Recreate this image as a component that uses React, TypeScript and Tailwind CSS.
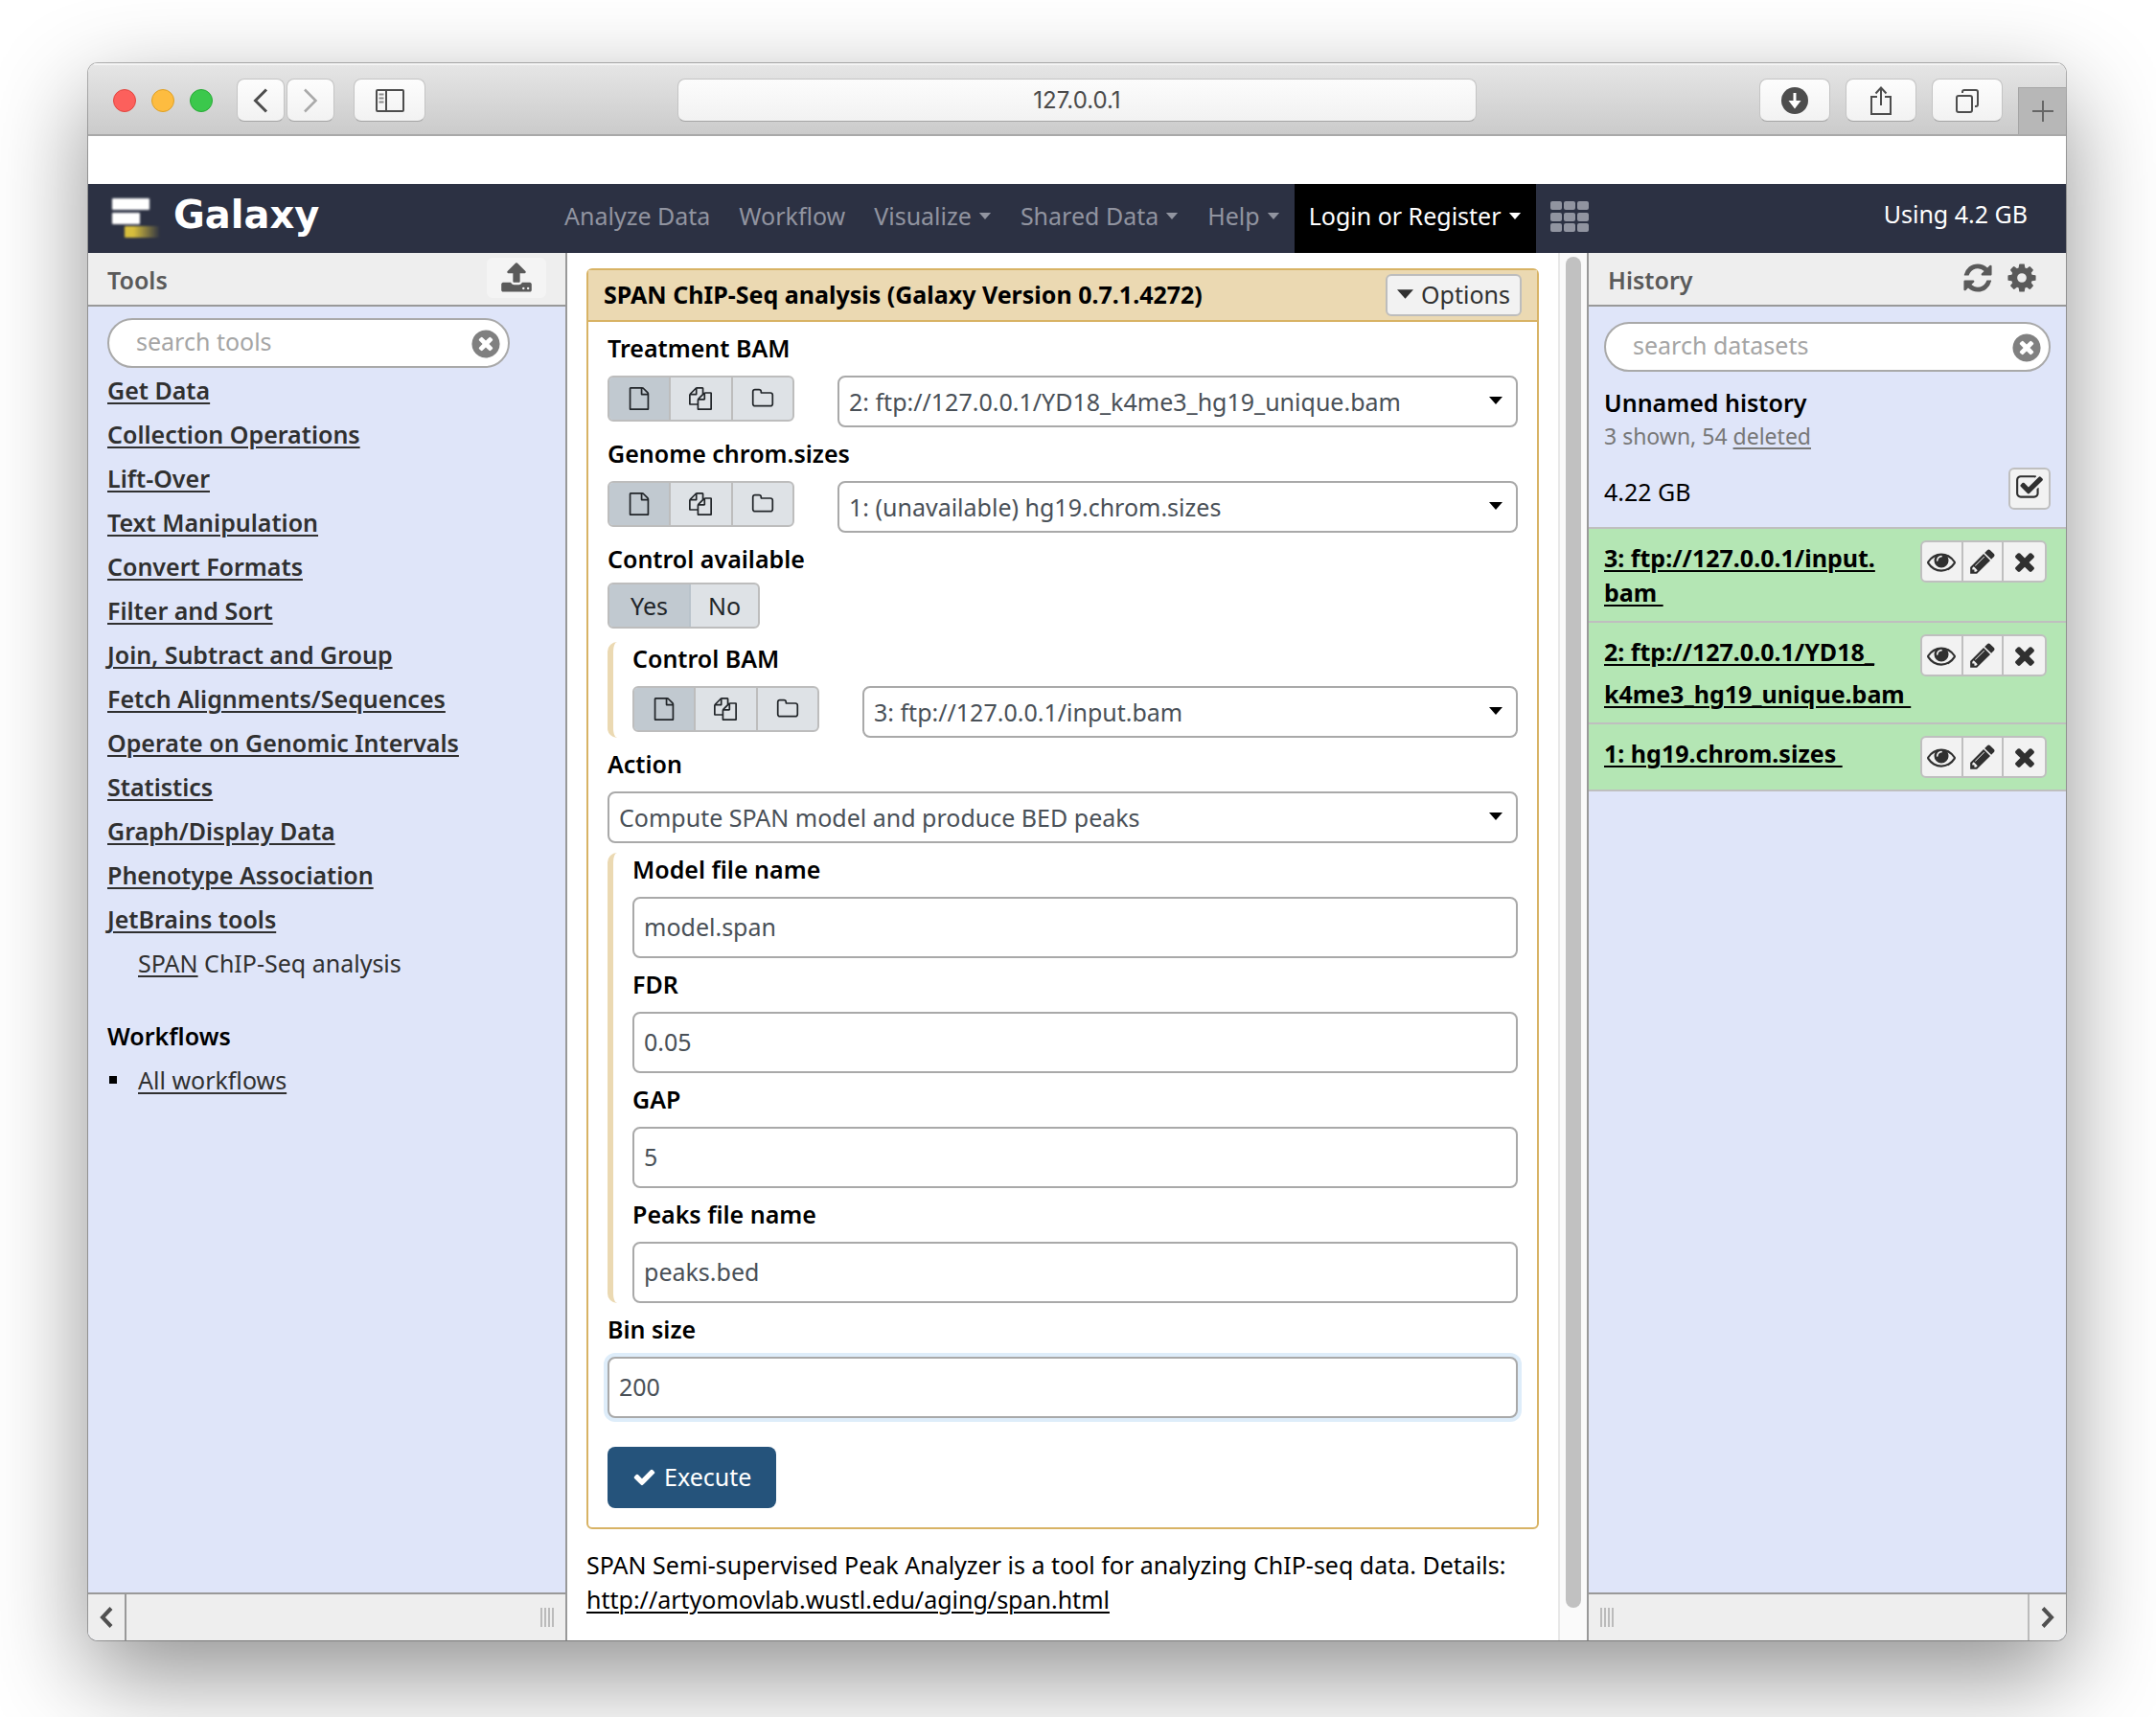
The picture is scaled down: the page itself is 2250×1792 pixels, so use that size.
import React, { useId } from "react";

const PATHS = {
  file: "M1596 380q28 28 48 76t20 88v1152q0 40-28 68t-68 28h-1344q-40 0-68-28t-28-68v-1600q0-40 28-68t68-28h896q40 0 88 20t76 48zm-444-244v376h376q-10-29-22-41l-313-313q-12-12-41-22zm384 1528v-1024h-416q-40 0-68-28t-28-68v-416h-768v1536h1280z",
  files: "M1696 384q40 0 68 28t28 68v1216q0 40-28 68t-68 28h-960q-40 0-68-28t-28-68v-288h-544q-40 0-68-28t-28-68v-672q0-40 20-88t48-76l408-408q28-28 76-48t88-20h416q40 0 68 28t28 68v328q68-40 128-40h416zm-544 213l-299 299h299v-299zm-640-384l-299 299h299v-299zm196 647l316-316v-416h-384v416q0 40-28 68t-68 28h-416v640h512v-256q0-40 20-88t48-76zm956 804v-1152h-384v416q0 40-28 68t-68 28h-416v640h896z",
  folder: "M1600 1312v-704q0-40-28-68t-68-28h-704q-40 0-68-28t-28-68v-64q0-40-28-68t-68-28h-320q-40 0-68 28t-28 68v960q0 40 28 68t68 28h1216q40 0 68-28t28-68zm128-704v704q0 92-66 158t-158 66h-1216q-92 0-158-66t-66-158v-960q0-92 66-158t158-66h320q92 0 158 66t66 158v32h672q92 0 158 66t66 158z",
  check: "M1671 566q0 40-28 68l-724 724-136 136q-28 28-68 28t-68-28l-136-136-362-362q-28-28-28-68t28-68l136-136q28-28 68-28t68 28l294 295 656-657q28-28 68-28t68 28l136 136q28 28 28 68z",
  eye: "M1664 960q-152-236-381-353 61 104 61 225 0 185-131.5 316.5t-316.5 131.5-316.5-131.5-131.5-316.5q0-121 61-225-229 117-381 353 133 205 333.5 326.5t434.5 121.5 434.5-121.5 333.5-326.5zm-720-384q0-20-14-34t-34-14q-125 0-214.5 89.5t-89.5 214.5q0 20 14 34t34 14 34-14 14-34q0-86 61-147t147-61q20 0 34-14t14-34zm848 384q0 34-20 69-140 230-376.5 368.5t-499.5 138.5-499.5-139-376.5-368q-20-35-20-69t20-69q140-229 376.5-368t499.5-139 499.5 139 376.5 368q20 35 20 69z",
  pencil: "M491 1536l91-91-235-235-91 91v107h128v128h107zm523-928q0-22-22-22-10 0-17 7l-542 542q-7 7-7 17 0 22 22 22 10 0 17-7l542-542q7-7 7-17zm-54-192l416 416-832 832h-416v-416zm683 96q0 53-37 90l-166 166-416-416 166-165q36-38 90-38 53 0 91 38l235 234q37 39 37 91z",
  times: "M1490 1322q0 40-28 68l-136 136q-28 28-68 28t-68-28l-294-294-294 294q-28 28-68 28t-68-28l-136-136q-28-28-28-68t28-68l294-294-294-294q-28-28-28-68t28-68l136-136q28-28 68-28t68 28l294 294 294-294q28-28 68-28t68 28l136 136q28 28 28 68t-28 68l-294 294 294 294q28 28 28 68z",
  checkSquare: "M1472 930v318q0 119-84.5 203.5t-203.5 84.5h-832q-119 0-203.5-84.5t-84.5-203.5v-832q0-119 84.5-203.5t203.5-84.5h832q63 0 117 25 15 7 18 23 3 17-9 29l-49 49q-10 10-23 10-3 0-9-2-23-6-45-6h-832q-66 0-113 47t-47 113v832q0 66 47 113t113 47h832q66 0 113-47t47-113v-254q0-13 9-22l64-64q10-10 23-10 6 0 12 3 20 8 20 29zm231-489l-814 814q-24 24-57 24t-57-24l-430-430q-24-24-24-57t24-57l110-110q24-24 57-24t57 24l263 263 647-647q24-24 57-24t57 24l110 110q24 24 24 57t-24 57z",
  refresh: "M1639 1056q0 5-1 7-64 268-268 434.5t-478 166.5q-146 0-282.5-55t-243.5-157l-129 129q-19 19-45 19t-45-19-19-45v-448q0-26 19-45t45-19h448q26 0 45 19t19 45-19 45l-137 137q71 66 161 102t187 36q134 0 250-65t186-179q11-17 53-117 8-23 30-23h192q13 0 22.5 9.5t9.5 22.5zm25-800v448q0 26-19 45t-45 19h-448q-26 0-45-19t-19-45 19-45l138-138q-148-137-349-137-134 0-250 65t-186 179q-11 17-53 117-8 23-30 23h-199q-13 0-22.5-9.5t-9.5-22.5v-7q65-268 270-434.5t480-166.5q146 0 284 55.5t245 156.5l130-129q19-19 45-19t45 19 19 45z",
  cog: "M1152 896q0-106-75-181t-181-75-181 75-75 181 75 181 181 75 181-75 75-181zm512-109v222q0 12-8 23t-20 13l-185 28q-19 54-39 91 35 50 107 138 10 12 10 25t-9 23q-27 37-99 108t-94 71q-12 0-26-9l-138-108q-44 23-91 38-16 136-29 186-7 28-36 28h-222q-14 0-24.5-8.5t-11.5-21.5l-28-184q-49-16-90-37l-141 107q-10 9-25 9-14 0-25-11-126-114-165-168-7-10-7-23 0-12 8-23 15-21 51-66.5t54-70.5q-27-50-41-99l-183-27q-13-2-21-12.5t-8-23.5v-222q0-12 8-23t19-13l186-28q14-46 39-92-40-57-107-138-10-12-10-24 0-10 9-23 26-36 98.5-107.5t94.5-71.5q13 0 26 10l138 107q44-23 91-38 16-136 29-186 7-28 36-28h222q14 0 24.5 8.5t11.5 21.5l28 184q49 16 90 37l142-107q9-9 24-9 13 0 25 10 129 119 165 170 7 8 7 22 0 12-8 23-15 21-51 66.5t-54 70.5q26 50 41 98l183 28q13 2 21 12.5t8 23.5z",
  upload: "M1344 1472q0-26-19-45t-45-19-45 19-19 45 19 45 45 19 45-19 19-45zm256 0q0-26-19-45t-45-19-45 19-19 45 19 45 45 19 45-19 19-45zm128-224v320q0 40-28 68t-68 28h-1472q-40 0-68-28t-28-68v-320q0-40 28-68t68-28h427q21 56 70.5 92t110.5 36h256q61 0 110.5-36t70.5-92h427q40 0 68 28t28 68zm-325-648q-17 40-59 40h-256v448q0 26-19 45t-45 19h-256q-26 0-45-19t-19-45v-448h-256q-42 0-59-40-17-39 14-69l448-448q18-19 45-19t45 19l448 448q31 30 14 69z",
  timesCircle: "M1277 1122q0-26-19-45l-181-181 181-181q19-19 19-45 0-27-19-46l-90-90q-19-19-46-19-26 0-45 19l-181 181-181-181q-19-19-45-19-27 0-46 19l-90 90q-19 19-19 46 0 26 19 45l181 181-181 181q-19 19-19 45 0 27 19 46l90 90q19 19 46 19 26 0 45-19l181-181 181 181q19 19 45 19 27 0 46-19l90-90q19-19 19-46zm387-226q0 209-103 385.5t-279.5 279.5-385.5 103-385.5-103-279.5-279.5-103-385.5 103-385.5 279.5-279.5 385.5-103 385.5 103 279.5 279.5 103 385.5z",
};

function Icon({ name, className }: { name: keyof typeof PATHS; className: string }) {
  return (
    <svg viewBox="0 0 1792 1792" fill="currentColor" className={className} aria-hidden="true">
      <path d={PATHS[name]} />
    </svg>
  );
}

function Caret({ className }: { className: string }) {
  return (
    <svg viewBox="0 0 14 8" fill="currentColor" className={className} aria-hidden="true">
      <path d="M0 0h14L7 8z" />
    </svg>
  );
}

const toolbarButton =
  "flex h-[45px] items-center justify-center rounded-lg border border-[#c4c4c4] border-b-[#a5a5a5] bg-linear-to-b from-[#fdfdfd] to-[#f2f2f2] text-[#4d4d4d]";

function TitleBar() {
  return (
    <div className="grid h-[76px] grid-cols-[minmax(0,1fr)_834px_minmax(0,1fr)] border-b-2 border-[#a9a9a9] bg-linear-to-b from-[#e6e6e6] to-[#cbcbcb] shadow-[inset_0_2px_0_#f4f4f4]">
      <div className="flex items-center pl-[26px] pt-[3px]">
        <div className="flex gap-4">
          <span className="size-6 rounded-full border border-[#e2463f] bg-[#fc605c]" />
          <span className="size-6 rounded-full border border-[#dfa023] bg-[#fdbc40]" />
          <span className="size-6 rounded-full border border-[#27aa35] bg-[#3bc84c]" />
        </div>
        <div className="ml-[25px] flex gap-[2px]">
          <button aria-label="Back" className={toolbarButton + " w-[50px]"}>
            <svg viewBox="0 0 16 26" className="h-[26px] w-4" fill="none" stroke="currentColor" strokeWidth="3">
              <path d="M14 1.500 2.500 13 14 24.500" />
            </svg>
          </button>
          <button aria-label="Forward" className={toolbarButton + " w-[50px]"}>
            <svg viewBox="0 0 16 26" className="h-[26px] w-4" fill="none" stroke="#a9a9a9" strokeWidth="2.500">
              <path d="M2 1.500 13.500 13 2 24.500" />
            </svg>
          </button>
        </div>
        <button aria-label="Show sidebar" className={toolbarButton + " ml-5 w-[75px]"}>
          <svg viewBox="0 0 30 24" className="h-6 w-[30px]" fill="none" stroke="currentColor" strokeWidth="2">
            <rect x="1" y="1" width="28" height="22" rx="1" />
            <path d="M11 1v22" />
            <path d="M3.500 5.500h5M3.500 9.500h5M3.500 13.500h5" stroke="#8a8a8a" />
          </svg>
        </button>
      </div>
      <div className="flex items-center pt-[3px]">
        <input
          aria-label="Address"
          defaultValue="127.0.0.1"
          className="h-[45px] w-full rounded-lg border border-[#c4c4c4] border-b-[#a5a5a5] bg-linear-to-b from-[#fcfcfc] to-[#f2f2f2] text-center font-['Inter',sans-serif] text-[24px] text-[#4a4a4a] outline-none"
        />
      </div>
      <div className="flex items-center justify-end gap-4">
        <button aria-label="Downloads" className={toolbarButton + " mt-[3px] w-[74px]"}>
          <svg viewBox="0 0 28 28" className="size-7">
            <circle cx="14" cy="14" r="14" fill="#4d4d4d" />
            <path d="M12.500 6h3v8h5L14 22.500 7.500 14h5z" fill="#fff" />
          </svg>
        </button>
        <button aria-label="Share" className={toolbarButton + " mt-[3px] w-[74px]"}>
          <svg viewBox="0 0 24 32" className="h-8 w-6" fill="none" stroke="currentColor" strokeWidth="2">
            <path d="M8 12H2v18h20V12h-6M12 21V3M6.500 8.500 12 2.500l5.500 6" />
          </svg>
        </button>
        <button aria-label="Show all tabs" className={toolbarButton + " mt-[3px] w-[74px]"}>
          <svg viewBox="0 0 26 26" className="size-[26px]" fill="none" stroke="currentColor" strokeWidth="2">
            <rect x="2" y="8" width="16" height="17" rx="2" />
            <path d="M8 5V4a2 2 0 0 1 2-2h12a2 2 0 0 1 2 2v13a2 2 0 0 1-2 2h-1" />
          </svg>
        </button>
        <button
          aria-label="New tab"
          className="flex h-[49px] w-[50px] items-center justify-center self-end border-l border-t border-[#a5a5a5] bg-[#b7b7b7] text-[#666]"
        >
          <svg viewBox="0 0 22 22" className="size-[22px]" stroke="currentColor" strokeWidth="2">
            <path d="M11 0v22M0 11h22" />
          </svg>
        </button>
      </div>
    </div>
  );
}

function NavLink({ label, menu }: { label: string; menu?: boolean }) {
  return (
    <a href="#" className="flex items-center gap-[7px] px-[15px] text-[#9194a0]">
      {label}
      {menu && <Caret className="h-[7px] w-[14px]" />}
    </a>
  );
}

function Masthead() {
  return (
    <header className="flex h-[72px] items-stretch bg-[#2c3143]">
      <a href="#" className="flex w-[482px] items-start pl-[25px] pt-[15px] text-white">
        <svg viewBox="0 0 52 42" className="h-[42px] w-[52px] overflow-visible" aria-hidden="true">
          <defs>
            <linearGradient id="tail" x1="0" x2="1">
              <stop offset="0.25" stopColor="#d7be3c" />
              <stop offset="1" stopColor="#d7be3c" stopOpacity="0" />
            </linearGradient>
            <filter id="soft" x="-20%" y="-20%" width="140%" height="140%">
              <feGaussianBlur stdDeviation="0.8" />
            </filter>
          </defs>
          <g filter="url(#soft)">
            <rect x="0" y="0" width="39" height="12" rx="1" fill="#fff" />
            <rect x="0" y="15" width="29" height="12" rx="1" fill="#fff" />
            <rect x="13" y="29" width="37" height="12" rx="1" fill="url(#tail)" />
          </g>
        </svg>
        <span className="ml-3 font-['DejaVu_Sans',sans-serif] text-[40px] font-bold leading-[34px]">Galaxy</span>
      </a>
      <nav className="flex items-stretch pb-[6px]">
        <NavLink label="Analyze Data" />
        <NavLink label="Workflow" />
        <NavLink label="Visualize" menu />
        <NavLink label="Shared Data" menu />
        <NavLink label="Help" menu />
      </nav>
      <a href="#" className="flex items-center gap-[7px] bg-black px-[15px] pb-[6px] text-white">
        Login or Register
        <Caret className="h-[7px] w-[14px]" />
      </a>
      <a href="#" aria-label="Scratchbook" className="flex items-center pb-1 pl-[15px]">
        <svg viewBox="0 0 40 32" className="h-8 w-10" fill="#9194a0">
          {[0, 14, 28].map((x) =>
            [0, 12, 23].map((y) => <rect key={x + "-" + y} x={x} y={y} width="12" height="9" rx="2" />),
          )}
        </svg>
      </a>
      <div className="ml-auto pr-10 pt-[13px] leading-[36px] text-white">Using 4.2 GB</div>
    </header>
  );
}

function SearchBox({ label, className }: { label: string; className: string }) {
  return (
    <div className={"relative " + className}>
      <input
        type="text"
        aria-label={label}
        placeholder={label}
        className="h-[52px] w-full rounded-full border-2 border-[#a9a9a9] bg-white pb-1 pl-7 pr-14 outline-none placeholder:text-[#a5a5a5]"
      />
      <button aria-label={"Clear " + label} className="absolute right-2 top-[10px] text-[#808080]">
        <Icon name="timesCircle" className="size-[34px]" />
      </button>
    </div>
  );
}

const TOOL_SECTIONS = [
  "Get Data",
  "Collection Operations",
  "Lift-Over",
  "Text Manipulation",
  "Convert Formats",
  "Filter and Sort",
  "Join, Subtract and Group",
  "Fetch Alignments/Sequences",
  "Operate on Genomic Intervals",
  "Statistics",
  "Graph/Display Data",
  "Phenotype Association",
  "JetBrains tools",
];

const panelHeader =
  "flex h-[56px] shrink-0 items-center border-b-2 border-[#999] bg-[#eee] text-[#5a5a5a]";

function Grip() {
  return (
    <span className="flex h-5 gap-[2px]">
      <i className="w-[2px] bg-[#bbb]" />
      <i className="w-[2px] bg-[#bbb]" />
      <i className="w-[2px] bg-[#bbb]" />
      <i className="w-[2px] bg-[#bbb]" />
    </span>
  );
}

function ToolsPanel() {
  return (
    <aside className="flex w-[500px] shrink-0 flex-col border-r-2 border-[#999] bg-[#dfe5f9]">
      <div className={panelHeader + " justify-between px-5"}>
        <h2 className="pt-[2px] font-semibold">Tools</h2>
        <button
          aria-label="Upload data"
          className="mb-[2px] flex h-[42px] w-[62px] items-center justify-center rounded-md bg-[#f4f4f4]"
        >
          <Icon name="upload" className="size-[34px]" />
        </button>
      </div>
      <div className="flex-1 pl-5">
        <SearchBox label="search tools" className="mt-3 w-[420px]" />
        <ul className="leading-[46px] text-[#303030]">
          {TOOL_SECTIONS.map((name) => (
            <li key={name}>
              <a href="#" className="font-semibold underline decoration-2 underline-offset-[3px]">
                {name}
              </a>
            </li>
          ))}
          <li className="pl-8">
            <a href="#">
              <span className="underline decoration-2 underline-offset-[3px]">SPAN</span> ChIP-Seq analysis
            </a>
          </li>
        </ul>
        <h3 className="mt-[30px] font-semibold leading-[46px] text-black">Workflows</h3>
        <ul className="leading-[46px] text-[#303030]">
          <li className="flex items-center">
            <span className="ml-[2px] mr-[22px] size-2 bg-black" />
            <a href="#" className="underline decoration-2 underline-offset-[3px]">
              All workflows
            </a>
          </li>
        </ul>
      </div>
      <div className="flex h-[50px] border-t-2 border-[#999] bg-[#eee]">
        <button
          aria-label="Collapse tools panel"
          className="flex w-10 items-center justify-center border-r-2 border-[#999] text-[#505050]"
        >
          <svg viewBox="0 0 14 22" className="h-[22px] w-[14px]" fill="none" stroke="currentColor" strokeWidth="4">
            <path d="M12 1.500 3 11l9 9.500" />
          </svg>
        </button>
        <div className="flex flex-1 items-center justify-end pr-3">
          <Grip />
        </div>
      </div>
    </aside>
  );
}

function DataButtons() {
  return (
    <div className="flex h-12 w-[195px] shrink-0 overflow-hidden rounded-md border-2 border-[#bdbdbd] bg-[#dee2e6] text-[#212529]">
      <button aria-label="Single dataset" className="flex flex-1 items-center justify-center bg-[#c1c9d0]">
        <Icon name="file" className="size-6" />
      </button>
      <button
        aria-label="Multiple datasets"
        className="flex flex-1 items-center justify-center border-l-2 border-[#bdbdbd]"
      >
        <Icon name="files" className="size-6" />
      </button>
      <button
        aria-label="Dataset collection"
        className="flex flex-1 items-center justify-center border-l-2 border-[#bdbdbd]"
      >
        <Icon name="folder" className="size-6" />
      </button>
    </div>
  );
}

function SelectBox({ id, value }: { id: string; value: string }) {
  return (
    <div className="relative flex-1">
      <select
        id={id}
        className="block h-[54px] w-full appearance-none rounded-lg border-2 border-[#a9a9a9] bg-white pl-[10px] pr-10 text-[#495057] outline-none"
      >
        <option>{value}</option>
      </select>
      <Caret className="pointer-events-none absolute right-4 top-[22px] h-2 w-[14px] text-black" />
    </div>
  );
}

const fieldLabel = "mb-[11px] mt-[9px] block font-semibold leading-[36px] text-black";

function DataField({ label, value }: { label: string; value: string }) {
  const id = useId();
  return (
    <div>
      <label htmlFor={id} className={fieldLabel}>
        {label}
      </label>
      <div className="flex items-start gap-[45px]">
        <DataButtons />
        <SelectBox id={id} value={value} />
      </div>
    </div>
  );
}

function TextField({ label, value, active }: { label: string; value: string; active?: boolean }) {
  const id = useId();
  return (
    <div>
      <label htmlFor={id} className={fieldLabel}>
        {label}
      </label>
      <input
        id={id}
        type="text"
        defaultValue={value}
        className={
          "block h-16 w-full rounded-lg border-2 border-[#a9a9a9] bg-white px-[10px] pb-[3px] text-[#495057] outline-none" +
          (active ? " shadow-[0_0_0_4px_#deedfa]" : "")
        }
      />
    </div>
  );
}

function Nested({ className, children }: { className: string; children: React.ReactNode }) {
  return (
    <div className={"flow-root rounded-[10px] border-l-[6px] border-[#ebd9b2] pl-5 " + className}>
      <div className="-mt-[10px] flow-root">{children}</div>
    </div>
  );
}

function ActionField() {
  const id = useId();
  return (
    <div>
      <label htmlFor={id} className={fieldLabel}>
        Action
      </label>
      <SelectBox id={id} value="Compute SPAN model and produce BED peaks" />
    </div>
  );
}

function ToolForm() {
  return (
    <main className="min-w-0 flex-1 pb-6 pl-5 pr-5 pt-4">
      <section className="rounded-md border-2 border-[#d8b365]">
        <div className="flex h-[54px] items-center justify-between border-b-2 border-[#d8b365] bg-[#ebd9b2] pl-4 pr-4">
          <h1 className="pb-[2px] font-bold text-black">SPAN ChIP-Seq analysis (Galaxy Version 0.7.1.4272)</h1>
          <button className="flex h-[44px] items-center gap-2 rounded-md border-2 border-[#bdbdbd] bg-[#f2f2f2] px-[10px] pb-[2px] text-[#303030]">
            <Caret className="h-[10px] w-[17px]" />
            Options
          </button>
        </div>
        <form className="flow-root px-5 pb-5" onSubmit={(e) => e.preventDefault()}>
          <DataField label="Treatment BAM" value="2: ftp://127.0.0.1/YD18_k4me3_hg19_unique.bam" />
          <DataField label="Genome chrom.sizes" value="1: (unavailable) hg19.chrom.sizes" />
          <div className="flow-root" role="group" aria-label="Control available">
            <span className="mb-[7px] mt-[9px] block font-semibold leading-[36px] text-black">Control available</span>
            <div className="inline-flex h-12 overflow-hidden rounded-md border-2 border-[#bdbdbd] bg-[#dee2e6] align-top text-[#212529]">
              <button className="w-[83px] bg-[#c1c9d0]">Yes</button>
              <button className="w-[72px] border-l-2 border-[#b9c3cb]">No</button>
            </div>
          </div>
          <Nested className="mt-[14px]">
            <DataField label="Control BAM" value="3: ftp://127.0.0.1/input.bam" />
          </Nested>
          <ActionField />
          <Nested className="mt-[10px]">
            <TextField label="Model file name" value="model.span" />
            <TextField label="FDR" value="0.05" />
            <TextField label="GAP" value="5" />
            <TextField label="Peaks file name" value="peaks.bed" />
          </Nested>
          <TextField label="Bin size" value="200" active />
          <button className="mt-[30px] flex h-16 items-center gap-2 rounded-lg bg-[#25537b] px-[26px] pb-[2px] text-white">
            <Icon name="check" className="size-[25px]" />
            Execute
          </button>
        </form>
      </section>
      <p className="mb-px mt-[19px] leading-[36px] text-black">
        SPAN Semi-supervised Peak Analyzer is a tool for analyzing ChIP-seq data. Details:
        <br />
        <a href="#" className="underline decoration-2 underline-offset-[3px]">
          http://artyomovlab.wustl.edu/aging/span.html
        </a>
      </p>
    </main>
  );
}

const itemButton = "flex w-full items-center justify-center";

function DatasetItem({ lines, tall }: { lines: string[]; tall?: boolean }) {
  return (
    <li
      className={
        "flex items-start justify-between border-b-2 border-[#bfbfbf] bg-[#b4e6b4] pl-4 pr-5 " +
        (tall ? "py-2" : "py-3")
      }
    >
      <a
        href="#"
        className={
          "whitespace-pre font-bold text-black underline decoration-2 underline-offset-[3px] " +
          (tall ? "leading-[44px]" : "leading-[36px]")
        }
      >
        {lines.map((line) => (
          <React.Fragment key={line}>
            {line}
            <br />
          </React.Fragment>
        ))}
      </a>
      <div
        className={
          "-ml-10 grid h-[44px] w-[132px] shrink-0 grid-cols-3 divide-x-2 divide-[#bfbfbf] rounded-md border-2 border-[#bfbfbf] bg-[#f2f2f2] text-[#303030] " +
          (tall ? "mt-1" : "")
        }
      >
        <button aria-label="View data" className={itemButton}>
          <Icon name="eye" className="size-[30px]" />
        </button>
        <button aria-label="Edit attributes" className={itemButton}>
          <Icon name="pencil" className="size-[30px]" />
        </button>
        <button aria-label="Delete" className={itemButton}>
          <Icon name="times" className="size-[30px]" />
        </button>
      </div>
    </li>
  );
}

function HistoryPanel() {
  return (
    <aside className="flex w-[500px] shrink-0 flex-col border-l-2 border-[#999] bg-[#dfe5f9]">
      <div className={panelHeader + " pl-5 pr-[29px]"}>
        <h2 className="flex-1 pt-[2px] font-semibold">History</h2>
        <button aria-label="Refresh history" className="mr-3 pb-[2px]">
          <Icon name="refresh" className="size-[34px]" />
        </button>
        <button aria-label="History options" className="pb-[2px]">
          <Icon name="cog" className="size-[34px]" />
        </button>
      </div>
      <div className="flex-1">
        <SearchBox label="search datasets" className="mx-4 mt-4" />
        <div className="flex h-[164px] flex-col border-b-2 border-[#bfbfbf] px-4 pt-[14px]">
          <h3 className="font-semibold leading-[36px] text-black">Unnamed history</h3>
          <p className="text-[23px] leading-[34px] text-[#777]">
            3 shown, 54{" "}
            <a href="#" className="underline decoration-2 underline-offset-[3px]">
              deleted
            </a>
          </p>
          <div className="mt-4 flex items-start justify-between text-black">
            <span className="pt-[7px] leading-[36px]">4.22 GB</span>
            <button
              aria-label="Operations on multiple datasets"
              className="flex h-[44px] w-[44px] items-center justify-center rounded-md border-2 border-[#bfbfbf] bg-[#f2f2f2] pb-[2px] text-[#303030]"
            >
              <Icon name="checkSquare" className="size-[30px]" />
            </button>
          </div>
        </div>
        <ul>
          <DatasetItem lines={["3: ftp://127.0.0.1/input.", "bam "]} />
          <DatasetItem lines={["2: ftp://127.0.0.1/YD18_", "k4me3_hg19_unique.bam "]} tall />
          <DatasetItem lines={["1: hg19.chrom.sizes "]} />
        </ul>
      </div>
      <div className="flex h-[50px] border-t-2 border-[#999] bg-[#eee]">
        <div className="flex flex-1 items-center pl-3">
          <Grip />
        </div>
        <button
          aria-label="Collapse history panel"
          className="flex w-10 items-center justify-center border-l-2 border-[#bbb] text-[#505050]"
        >
          <svg viewBox="0 0 14 22" className="h-[22px] w-[14px]" fill="none" stroke="currentColor" strokeWidth="4">
            <path d="m2 1.500 9 9.500-9 9.500" />
          </svg>
        </button>
      </div>
    </aside>
  );
}

export default function App() {
  return (
    <div className="min-h-screen overflow-hidden bg-white pb-20 pl-[92px] pr-[94px] pt-[66px] font-['Noto_Sans',sans-serif] text-[25px] leading-[36px]">
      <div className="rounded-[10px] shadow-[0_0_0_1px_rgba(0,0,0,0.28),0_36px_100px_rgba(0,0,0,0.44)]">
        <div className="overflow-hidden rounded-[10px] bg-white">
          <TitleBar />
          <div className="h-[50px] bg-white" />
          <Masthead />
          <div className="flex items-stretch">
            <ToolsPanel />
            <ToolForm />
            <div className="flex w-[30px] shrink-0 justify-center border-l-2 border-[#e8e8e8] bg-[#fafafa] pb-[34px] pt-1">
              <div className="w-4 rounded-full bg-[#c1c1c1]" />
            </div>
            <HistoryPanel />
          </div>
        </div>
      </div>
    </div>
  );
}
